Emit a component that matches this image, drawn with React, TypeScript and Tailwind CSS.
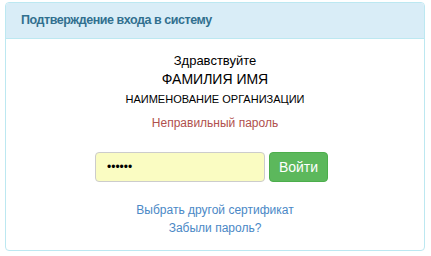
export default function App() {
  return (
    <div className="w-[431px] h-[256px] bg-white pt-[2px] pl-[5px] pr-[6px] font-['Liberation_Sans',Arial,sans-serif]">
      <div className="h-[249px] border border-[#bce8f1] rounded-[4px] flex flex-col overflow-hidden">
        <div className="h-[36px] bg-[#d9edf7] border-b border-[#bce8f1] px-[15px] flex items-center">
          <h3 className="text-[12.5px] tracking-[-0.45px] font-bold text-[#31708f]">Подтверждение входа в систему</h3>
        </div>
        <div className="flex flex-col items-center pt-[14px] text-black">
          <div className="text-[13px] leading-[16px]">Здравствуйте</div>
          <div className="text-[14px] leading-[18px] mt-px">ФАМИЛИЯ ИМЯ</div>
          <div className="text-[11px] leading-[16px] mt-[3px]">НАИМЕНОВАНИЕ ОРГАНИЗАЦИИ</div>
          <div className="text-[12px] leading-[16px] mt-[8px] text-[#b0504d]">Неправильный пароль</div>
          <div className="flex gap-[4px] mt-[21px] pr-[7px]">
            <input
              type="password"
              defaultValue="123456"
              readOnly
              className="w-[170px] h-[30px] bg-[#fafcc2] border border-[#ccc] rounded-[4px] px-[11px] text-[12px] text-black outline-none"
            />
            <button className="w-[59px] h-[30px] bg-[#5cb85c] border border-[#4cae4c] rounded-[4px] text-white text-[14px]">
              Войти
            </button>
          </div>
          <a href="#" className="text-[12px] leading-[18px] mt-[19px] text-[#4a88c6]">Выбрать другой сертификат</a>
          <a href="#" className="text-[12px] leading-[18px] text-[#4a88c6]">Забыли пароль?</a>
        </div>
      </div>
    </div>
  );
}
